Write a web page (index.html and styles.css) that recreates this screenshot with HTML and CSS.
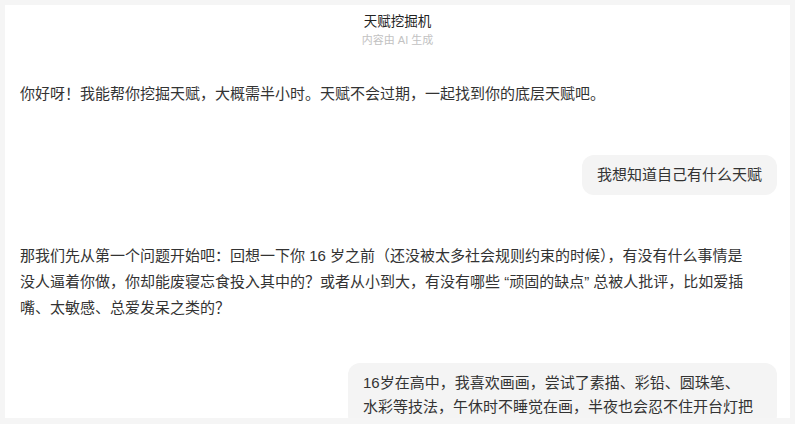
FILE: index.html
```html
<!DOCTYPE html>
<html lang="zh-CN">
<head>
<meta charset="utf-8">
<title>天赋挖掘机</title>
<link rel="stylesheet" href="styles.css">
</head>
<body>
<main class="panel">
  <header class="header">
    <div class="title">天赋挖掘机</div>
    <div class="subtitle">内容由 AI 生成</div>
  </header>
  <section class="chat">
    <p class="msg-ai msg-first">你好呀！我能帮你挖掘天赋，大概需半小时。天赋不会过期，一起找到你的底层天赋吧。</p>
    <div class="msg-user gap-lg"><span class="bubble">我想知道自己有什么天赋</span></div>
    <p class="msg-ai gap-lg">那我们先从第一个问题开始吧：回想一下你 16 岁之前（还没被太多社会规则约束的时候），有没有什么事情是没人逼着你做，你却能废寝忘食投入其中的？或者从小到大，有没有哪些 “顽固的缺点” 总被人批评，比如爱插嘴、太敏感、总爱发呆之类的？</p>
    <div class="msg-user gap-md"><span class="bubble bubble-long"><span class="bubble-text">16岁在高中，我喜欢画画，尝试了素描、彩铅、圆珠笔、水彩等技法，午休时不睡觉在画，半夜也会忍不住开台灯把</span></span></div>
  </section>
</main>
</body>
</html>
```
FILE: styles.css
```css
* { box-sizing: border-box; }
html, body { margin: 0; padding: 0; }
body {
  background: #f5f5f5;
  font-family: "Liberation Sans", "Noto Sans CJK SC", sans-serif;
  color: #333;
  height: 424px;
  overflow: hidden;
  padding: 5px 5px 6px 5px;
}
.panel {
  background: #fff;
  height: 413px;
  overflow: hidden;
}
.header {
  padding-top: 7px;
  text-align: center;
}
.title {
  font-size: 13.5px;
  line-height: 20px;
  color: #222;
}
.subtitle {
  font-size: 11px;
  line-height: 16px;
  color: #c2c2c2;
}
.chat {
  display: flex;
  flex-direction: column;
  padding: 0 13px 0 15px;
}
.msg-ai {
  margin: 0;
  font-size: 15px;
  line-height: 26px;
  max-width: 734px;
}
.msg-first { margin-top: 33px; }
.gap-lg { margin-top: 48px; }
.gap-md { margin-top: 42px; }
.msg-user {
  display: flex;
  justify-content: flex-end;
}
.bubble {
  display: block;
  background: #f4f4f4;
  border-radius: 12px;
  padding: 8px 15px;
  font-size: 15px;
  line-height: 24px;
  color: #333;
}
.bubble-long {
  width: 429px;
}
.bubble-text {
  display: block;
  max-width: 391px;
}
```
